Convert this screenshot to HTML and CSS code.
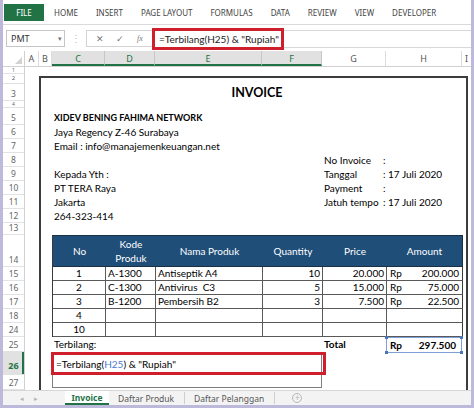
FILE: index.html
```html
<!DOCTYPE html>
<html>
<head>
<meta charset="utf-8">
<link rel="stylesheet" href="styles.css">
</head>
<body>
<div class="app">
  <div class="ribbon">
    <span class="file-tab">FILE</span>
    <nav class="tabs">
      <span>HOME</span><span>INSERT</span><span>PAGE LAYOUT</span><span>FORMULAS</span><span>DATA</span><span>REVIEW</span><span>VIEW</span><span>DEVELOPER</span>
    </nav>
  </div>
  <div class="fbar">
    <div class="namebox"><span>PMT</span><span class="caret">&#9662;</span></div>
    <span class="grip">&#8942;</span>
    <div class="fbtns"><span class="fb">&#10005;</span><span class="fb">&#10003;</span><span class="fb fx">fx</span></div>
    <div class="finput">
      <span class="fhl">=Terbilang(H25) &amp; "Rupiah"</span>
      <span class="frest"></span>
    </div>
  </div>
  <div class="colhdr">
    <div class="corner"><span class="tri"></span></div>
    <div class="ch ca">A</div>
    <div class="ch cb">B</div>
    <div class="ch cc sel">C</div>
    <div class="ch cd sel">D</div>
    <div class="ch ce sel">E</div>
    <div class="ch cf sel">F</div>
    <div class="ch cg">G</div>
    <div class="ch chh">H</div>
    <div class="ch ci">I</div>
  </div>
  <div class="grid">
    <div class="rowhdr">
      <div class="rh h7 tiny">1</div>
      <div class="rh h10 small">2</div>
      <div class="rh h17">3</div>
      <div class="rh h7 tiny">4</div>
      <div class="rh h17">5</div>
      <div class="rh h14">6</div>
      <div class="rh h14">7</div>
      <div class="rh h14">8</div>
      <div class="rh h14">9</div>
      <div class="rh h14">10</div>
      <div class="rh h14">11</div>
      <div class="rh h14">12</div>
      <div class="rh h12">13</div>
      <div class="rh h32">14</div>
      <div class="rh h14">15</div>
      <div class="rh h14">16</div>
      <div class="rh h14">17</div>
      <div class="rh h14">18</div>
      <div class="rh h14">24</div>
      <div class="rh h15">25</div>
      <div class="rh h23 rsel">26</div>
      <div class="rh h15">27</div>
    </div>
    <div class="sheet">
      <div class="invoice">
        <div class="sp6"></div>
        <div class="title">INVOICE</div>
        <div class="sp7"></div>
        <div class="company">XIDEV BENING FAHIMA NETWORK</div>
        <div class="line"><span class="l">Jaya Regency Z-46 Surabaya</span><span></span><span></span></div>
        <div class="line"><span class="l">Email : info@manajemenkeuangan.net</span><span></span><span></span></div>
        <div class="line"><span class="l"></span><span class="k">No Invoice</span><span class="v">:</span></div>
        <div class="line"><span class="l">Kepada Yth :</span><span class="k">Tanggal</span><span class="v">: 17 Juli 2020</span></div>
        <div class="line"><span class="l">PT TERA Raya</span><span class="k">Payment</span><span class="v">:</span></div>
        <div class="line"><span class="l">Jakarta</span><span class="k">Jatuh tempo</span><span class="v">: 17 Juli 2020</span></div>
        <div class="line"><span class="l">264-323-414</span><span></span><span></span></div>
        <div class="sp12"></div>
        <div class="tbl">
          <div class="th">No</div>
          <div class="th">Kode<br>Produk</div>
          <div class="th">Nama Produk</div>
          <div class="th">Quantity</div>
          <div class="th">Price</div>
          <div class="th">Amount</div>

          <div class="td c">1</div><div class="td">A-1300</div><div class="td">Antiseptik A4</div><div class="td r">10</div><div class="td r">20.000</div><div class="td amt"><span>Rp</span><span>200.000</span></div>
          <div class="td c">2</div><div class="td">C-1300</div><div class="td">Antivirus&nbsp; C3</div><div class="td r">5</div><div class="td r">15.000</div><div class="td amt"><span>Rp</span><span>75.000</span></div>
          <div class="td c">3</div><div class="td">B-1200</div><div class="td">Pembersih B2</div><div class="td r">3</div><div class="td r">7.500</div><div class="td amt"><span>Rp</span><span>22.500</span></div>
          <div class="td c">4</div><div class="td"></div><div class="td"></div><div class="td"></div><div class="td"></div><div class="td"></div>
          <div class="td c">10</div><div class="td"></div><div class="td"></div><div class="td"></div><div class="td"></div><div class="td"></div>
        </div>
        <div class="r25">
          <span class="l">Terbilang:</span>
          <span class="tot">Total</span>
          <span class="totbox"><b>Rp</b><b>297.500</b><i class="hd h1"></i><i class="hd h2"></i><i class="hd h3"></i><i class="hd h4"></i></span>
        </div>
        <div class="merged">
          <div class="redbox">=Terbilang(<span class="ref">H25</span>) &amp; "Rupiah"</div>
        </div>
      </div>
    </div>
  </div>
  <div class="tabsbar">
    <div class="navarrows"><span>&#9666;</span><span>&#9656;</span></div>
    <span class="stab active">Invoice</span>
    <span class="stab">Daftar Produk</span>
    <span class="stab">Daftar Pelanggan</span>
    <span class="addtab">+</span>
  </div>
</div>
</body>
</html>
```

FILE: styles.css
```css
* { box-sizing: border-box; margin: 0; padding: 0; }
html, body { width: 474px; height: 408px; overflow: hidden; }
body { background: #bdb9da; font-family: "Lato", sans-serif; color: #000; }

.app {
  margin: 0 3px;
  width: 468px;
  height: 405px;
  background: #fff;
  display: flex;
  flex-direction: column;
  overflow: hidden;
}

/* ribbon */
.ribbon {
  height: 25px;
  flex: none;
  display: flex;
  align-items: flex-start;
  padding: 4px 0 0 1px;
  border-bottom: 1px solid #dadada;
  font-family: "Noto Sans", sans-serif;
  font-size: 8px;
}
.file-tab {
  width: 40px;
  height: 17px;
  background: #217346;
  color: #fff;
  display: flex;
  align-items: center;
  justify-content: center;
}
.tabs {
  display: flex;
  gap: 18px;
  margin-left: 10px;
  line-height: 17px;
  color: #444;
}

/* formula bar */
.fbar {
  height: 26px;
  flex: none;
  display: flex;
  align-items: flex-start;
  font-size: 10px;
}
.namebox {
  margin: 5px 0 0 3px;
  width: 59px;
  height: 17px;
  border: 1px solid #c6c6c6;
  display: flex;
  align-items: center;
  justify-content: space-between;
  padding: 0 2px 0 4px;
  font-family: "Noto Sans", sans-serif;
  font-size: 9px;
  color: #333;
}
.caret { font-size: 7px; color: #777; }
.grip {
  width: 21px;
  margin-top: 5px;
  text-align: center;
  line-height: 17px;
  color: #c0c0c0;
  font-size: 10px;
}
.fbtns {
  margin-top: 5px;
  width: 66px;
  height: 17px;
  border: 1px solid #d4d4d4;
  border-right: none;
  display: flex;
  align-items: center;
  padding-left: 8px;
  gap: 10px;
  color: #777;
  font-size: 9px;
}
.fb { width: 10px; text-align: center; }
.fx { font-style: italic; font-family: "Liberation Serif", serif; font-size: 8px; }
.finput {
  flex: 1;
  height: 22px;
  margin-top: 3px;
  display: flex;
  align-items: center;
}
.fhl {
  width: 132px;
  height: 22px;
  border: 3px solid #cf1f2c;
  padding-left: 4px;
  line-height: 16px;
  font-size: 10px;
  color: #222;
  white-space: nowrap;
}
.frest {
  flex: 1;
  height: 18px;
  border-top: 1px solid #d8d8d8;
  border-bottom: 1px solid #d8d8d8;
}

/* column headers */
.colhdr {
  height: 16px;
  flex: none;
  display: flex;
  font-family: "Noto Sans", sans-serif;
  font-size: 9px;
  color: #555;
  border-bottom: 1px solid #d0d0d0;
}
.corner {
  width: 22px;
  border-right: 1px solid #d0d0d0;
  position: relative;
}
.tri {
  position: absolute;
  right: 2px;
  bottom: 2px;
  width: 0;
  height: 0;
  border-left: 7px solid transparent;
  border-bottom: 7px solid #d2d2d2;
}
.ch {
  border-right: 1px solid #dcdcdc;
  text-align: center;
  line-height: 15px;
}
.ch.sel {
  background: #e1e1e1;
  color: #217346;
  border-bottom: 2px solid #217346;
  border-right-color: #c6c6c6;
}
.ca { width: 14px; }
.cb { width: 13px; }
.cc { width: 53px; }
.cd { width: 50px; }
.ce { width: 107px; }
.cf { width: 60px; }
.cg { width: 64px; }
.chh { width: 76px; }
.ci { flex: 1; border-right: none; }

/* grid body */
.grid {
  height: 323px;
  flex: none;
  display: flex;
  overflow: hidden;
}
.rowhdr {
  width: 22px;
  flex: none;
  border-right: 1px solid #d0d0d0;
  font-family: "Noto Sans", sans-serif;
  font-size: 8.5px;
  color: #666;
}
.rh {
  display: flex;
  align-items: flex-end;
  justify-content: center;
  border-bottom: 1px solid #e2e2e2;
  overflow: hidden;
  line-height: 11px;
  padding-bottom: 1px;
}
.rh.tiny { font-size: 5px; line-height: 5px; padding-bottom: 0; }
.rh.small { font-size: 6px; line-height: 7px; padding-bottom: 1px; }
.rh.rsel {
  background: #e1e1e1;
  color: #217346;
  font-weight: bold;
  font-size: 9px;
  padding-bottom: 3px;
  box-shadow: inset -2px 0 0 #217346;
}
.h7 { height: 7px; }
.h10 { height: 10px; }
.h12 { height: 12px; }
.h14 { height: 14px; }
.h15 { height: 15px; }
.h17 { height: 17px; }
.h23 { height: 23px; }
.h32 { height: 32px; }

.sheet {
  flex: 1;
  overflow: hidden;
}
.invoice {
  margin: 9px 0 0 14px;
  width: 429px;
  height: 330px;
  border: 2px solid #3c3c3c;
  border-bottom: none;
  padding: 0 4px 0 11px;
  font-size: 10px;
}
.sp6 { height: 6px; }
.sp7 { height: 7px; }
.sp12 { height: 12px; }
.title {
  height: 17px;
  line-height: 18px;
  text-align: center;
  font-weight: bold;
  font-size: 12.5px;
}
.company {
  height: 17px;
  padding: 3px 0 0 2px;
  line-height: 14px;
  font-weight: bold;
  font-size: 9px;
}
.line {
  height: 14px;
  line-height: 14px;
  display: grid;
  grid-template-columns: 270px 61px 1fr;
  white-space: nowrap;
}
.line .l { padding-left: 2px; }
.line .k { padding-left: 2px; }

/* table */
.tbl {
  display: grid;
  grid-template-columns: 53px 50px 107px 60px 64px 76px;
  grid-template-rows: 32px repeat(5, 14px);
  border-left: 1px solid #3a3a3a;
}
.th {
  background: #1f4e79;
  color: #fff;
  display: flex;
  align-items: center;
  justify-content: center;
  text-align: center;
  line-height: 14px;
  border-top: 1px solid #1b2f45;
  border-bottom: 1px solid #1b2f45;
}
.th:nth-child(6) { border-right: 1px solid #1b2f45; }
.td {
  border-right: 1px solid #595959;
  border-bottom: 1px solid #595959;
  line-height: 13px;
  padding: 0 2px;
  white-space: nowrap;
}
.td:nth-child(6n) { border-right-color: #3a3a3a; }
.td.c { text-align: center; }
.td.r { text-align: right; }
.td.amt {
  display: flex;
  justify-content: space-between;
  padding: 0 3px 0 3px;
}

.r25 {
  height: 15px;
  display: grid;
  grid-template-columns: 270px 64px 76px;
  line-height: 14px;
}
.r25 .l { padding-left: 2px; }
.tot { padding-left: 2px; font-weight: bold; }
.totbox {
  position: relative;
  height: 16px;
  border: 1px solid #7e9fd8;
  display: flex;
  justify-content: space-between;
  padding: 0 5px 0 3px;
}
.hd {
  position: absolute;
  width: 3px;
  height: 3px;
  background: #4d72b8;
}
.h1 { left: -2px; top: -2px; }
.h2 { right: -2px; top: -2px; }
.h3 { left: -2px; bottom: -2px; }
.h4 { right: -2px; bottom: -2px; }

.merged {
  position: relative;
  width: 270px;
  height: 36px;
  border: 1px solid #7f7f7f;
}
.redbox {
  position: absolute;
  left: -2px;
  top: -1px;
  width: 275px;
  height: 23px;
  border: 3px solid #cf1f2c;
  padding-left: 2px;
  line-height: 18px;
  white-space: nowrap;
}
.ref { color: #4a7bd0; }

/* sheet tabs */
.tabsbar {
  height: 15px;
  flex: none;
  display: flex;
  align-items: stretch;
  background: #f3f3f3;
  border-top: 1px solid #d6d6d6;
  font-family: "Noto Sans", sans-serif;
  font-size: 8.5px;
  color: #555;
}
.navarrows {
  width: 62px;
  display: flex;
  gap: 10px;
  padding-left: 17px;
  align-items: center;
  color: #b5b5b5;
  font-size: 7px;
}
.stab {
  padding: 0 10px 0 9px;
  line-height: 13px;
  border-right: 1px solid #cfcfcf;
  margin: 1px 0;
}
.stab.active {
  background: #fff;
  color: #217346;
  font-weight: bold;
  border-right: none;
  border-bottom: 2px solid #217346;
  margin: 0;
  width: 44px;
  padding: 0;
  text-align: center;
  line-height: 13px;
}
.addtab {
  margin: 2px 0 0 17px;
  width: 10px;
  height: 10px;
  border: 1px solid #b8b8b8;
  border-radius: 50%;
  color: #b0b0b0;
  font-size: 8px;
  line-height: 8px;
  text-align: center;
}
```
